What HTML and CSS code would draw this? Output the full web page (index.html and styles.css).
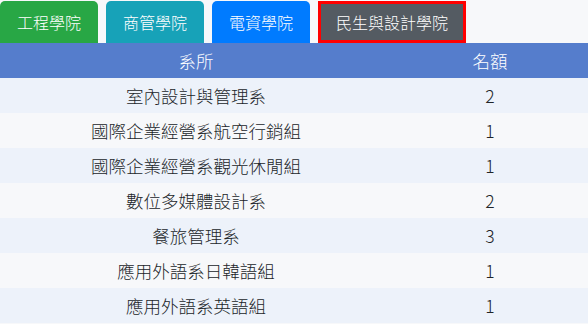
FILE: index.html
```html
<!DOCTYPE html>
<html lang="zh-Hant">
<head>
<meta charset="utf-8">
<link rel="stylesheet" href="styles.css">
</head>
<body>
<div class="tabs">
  <div class="tab tab-green">工程學院</div>
  <div class="tab tab-teal">商管學院</div>
  <div class="tab tab-blue">電資學院</div>
  <div class="tab tab-gray active">民生與設計學院</div>
</div>
<table class="quota">
  <thead>
    <tr><th class="col-dept">系所</th><th class="col-num">名額</th></tr>
  </thead>
  <tbody>
    <tr><td>室內設計與管理系</td><td>2</td></tr>
    <tr><td>國際企業經營系航空行銷組</td><td>1</td></tr>
    <tr><td>國際企業經營系觀光休閒組</td><td>1</td></tr>
    <tr><td>數位多媒體設計系</td><td>2</td></tr>
    <tr><td>餐旅管理系</td><td>3</td></tr>
    <tr><td>應用外語系日韓語組</td><td>1</td></tr>
    <tr><td>應用外語系英語組</td><td>1</td></tr>
  </tbody>
</table>
</body>
</html>
```
FILE: styles.css
```css
html, body {
  margin: 0;
  padding: 0;
  background: #f7f8fa;
  font-family: "Noto Sans CJK TC", "Noto Sans", sans-serif;
  font-weight: 300;
  color: #212529;
}
.tabs {
  display: flex;
  gap: 8px;
  padding-top: 1px;
}
.tab {
  height: 42px;
  box-sizing: border-box;
  padding: 0 17px;
  display: flex;
  align-items: center;
  font-size: 16px;
  color: #fff;
  border-radius: 5px 5px 0 0;
  line-height: 1;
}
.tab-green { background: #28a745; }
.tab-teal { background: #17a2b8; }
.tab-blue { background: #007bff; }
.tab-gray {
  background: #545b62;
  border: 3px solid #ff0000;
  border-radius: 0;
  padding: 0 15px;
}
.quota {
  width: 588px;
  border-collapse: collapse;
  font-size: 17.5px;
}
.quota th {
  background: #557dcc;
  color: #fff;
  font-weight: 300;
  height: 35px;
  padding: 0;
  text-align: center;
}
.col-dept { width: 392px; }
.quota td {
  height: 35px;
  padding: 0;
  text-align: center;
}
.quota tbody tr:nth-child(odd) td { background: #edf2fa; }
.quota tbody tr:nth-child(even) td { background: #f7f8fa; }
```
